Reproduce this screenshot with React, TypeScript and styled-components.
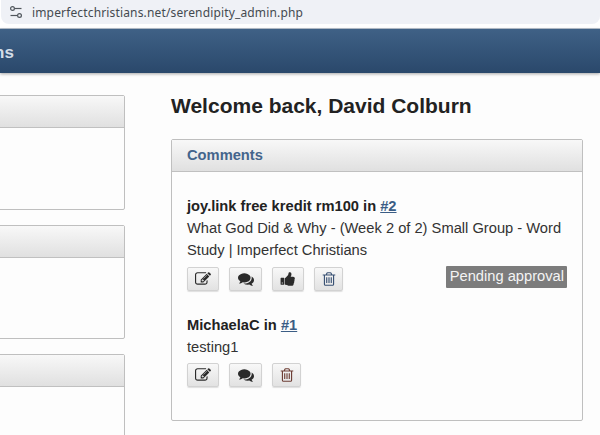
import React from 'react'
import styled, { createGlobalStyle } from 'styled-components'

const GlobalStyle = createGlobalStyle`
	html, body {
		margin: 0;
		padding: 0;
		background: #fdfdfd;
	}
	body {
		font-family: "Liberation Sans", Arial, sans-serif;
		color: #222;
	}
`

const Page = styled.div`
	width: 600px;
	height: 435px;
	overflow: hidden;
	background: #fdfdfd;
`

const BrowserBar = styled.div`
	height: 29px;
	box-sizing: border-box;
	background: #fff;
	padding: 0 0 4px 1px;
	border-bottom: 1px solid #b9c3cf;
`

const UrlPill = styled.div`
	height: 24px;
	display: flex;
	align-items: center;
	gap: 9px;
	padding-left: 8px;
	background: #eff1f6;
	border-radius: 0 0 8px 8px;
	font-family: "Noto Sans", "Open Sans", sans-serif;
	font-size: 12px;
	letter-spacing: 0.15px;
	color: #444a50;
`

const SiteHeader = styled.header`
	height: 44px;
	padding-top: 3px;
	box-sizing: border-box;
	display: flex;
	align-items: center;
	background: linear-gradient(#3f6186, #2a486b);
	box-shadow: 0 1px 3px rgba(0, 0, 0, 0.35);
	overflow: hidden;
`

const SiteTitle = styled.h1`
	margin: 0 0 0 -6px;
	font-size: 17px;
	font-weight: 700;
	color: #d3dde8;
`

const Columns = styled.div`
	display: flex;
	align-items: flex-start;
	gap: 46px;
	padding-top: 22px;
`

const Sidebar = styled.aside`
	width: 125px;
	flex: none;
	display: flex;
	flex-direction: column;
	gap: 15px;
`

const Main = styled.main`
	width: 412px;
	flex: none;
`

const Heading = styled.h2`
	margin: 0 0 23px;
	font-size: 21px;
	line-height: 21px;
	font-weight: 700;
	color: #222;
`

const Card = styled.section<{ $height: number }>`
	box-sizing: border-box;
	height: ${p => p.$height}px;
	background: #fdfdfd;
	border: 1px solid #bfbfbf;
	border-radius: 2px;
`

const SideCard = styled(Card)`
	margin-left: -10px;
	width: 135px;
`

const CardHeader = styled.div`
	height: 32px;
	box-sizing: border-box;
	display: flex;
	align-items: center;
	padding: 0 0 2px 15px;
	background: linear-gradient(#f8f8f8, #e0e0e0);
	border-bottom: 1px solid #c0c0c0;
	font-size: 14.7px;
	font-weight: 700;
	color: #44658c;
`

const CommentList = styled.div`
	display: flex;
	flex-direction: column;
	gap: 22px;
	padding: 23px 15px 0;
`

const Comment = styled.article``

const Author = styled.div`
	font-size: 14.7px;
	line-height: 22px;
	font-weight: 700;
	color: #222;
`

const EntryLink = styled.a`
	color: #3b5d85;
	text-decoration: underline;
`

const Excerpt = styled.div`
	font-size: 14.7px;
	line-height: 22px;
	color: #333;
`

const Actions = styled.div`
	display: flex;
	align-items: center;
	gap: 10px;
	margin-top: 5px;
`

const ActionButton = styled.button<{ $width: number }>`
	width: ${p => p.$width}px;
	height: 24px;
	padding: 0;
	display: flex;
	align-items: center;
	justify-content: center;
	background: linear-gradient(#f8f8f8, #e2e2e2);
	border: 1px solid #d2d2d2;
	border-radius: 2px;
	box-shadow: 0 1px 1px rgba(0, 0, 0, 0.12);
`

const Badge = styled.span`
	margin: 0 0 4px auto;
	padding: 0 3px 0 4px;
	height: 22px;
	line-height: 21px;
	background: #7c7c7c;
	border-radius: 1px;
	font-size: 14.7px;
	color: #f4f4f4;
`

const GlyphSvg = styled.svg`
	display: block;
	width: 16px;
	height: 16px;
`

type GlyphProps = { d: string; color?: string }

const Glyph = ({ d, color = '#2b2b2b' }: GlyphProps) => (
	<GlyphSvg viewBox="0 0 1792 1792" fill={color}>
		<path d={d} />
	</GlyphSvg>
)

const EDIT = 'M888 1184l116-116-152-152-116 116v56h96v96h56zm440-720q-16-16-33 1l-350 350q-17 17-1 33t33-1l350-350q17-17 1-33zm80 594v190q0 119-84.5 203.5t-203.5 84.5h-832q-119 0-203.5-84.5t-84.5-203.5v-832q0-119 84.5-203.5t203.5-84.5h832q63 0 117 25 15 7 18 23 3 17-9 29l-49 49q-14 14-32 8-23-6-45-6h-832q-66 0-113 47t-47 113v832q0 66 47 113t113 47h832q66 0 113-47t47-113v-126q0-13 9-22l64-64q15-15 35-7t20 29zm-96-738l288 288-672 672h-288v-288zm444 132l-92 92-288-288 92-92q28-28 68-28t68 28l152 152q28 28 28 68t-28 68z'
const COMMENTS = 'M1408 768q0 139-94 257t-256.5 186.5-353.5 68.5q-86 0-176-16-124 88-278 128-36 9-86 16h-3q-11 0-20.5-8t-11.5-21q-1-3-1-6.5t.5-6.5 2-6l2.5-5 3.5-5.5 4-5 4.5-5 4-4.5q5-6 23-25t26-29.5 22.5-29 25-38.5 20.5-44q-124-72-195-177t-71-224q0-139 94-257t256.5-186.5 353.5-68.5 353.5 68.5 256.5 186.5 94 257zm384 256q0 120-71 224.5t-195 176.5q10 24 20.5 44t25 38.5 22.5 29 26 29.5 23 25q1 1 4 4.5t4.5 5 4 5 3.5 5.5l2.5 5 2 6 .5 6.5-1 6.5q-3 14-13 22t-22 7q-50-7-86-16-154-40-278-128-90 16-176 16-271 0-472-132 58 4 88 4 161 0 309-45t264-129q125-92 192-212t67-254q0-77-23-152 129 71 204 178t75 230z'
const THUMB = 'M320 1344q0-26-19-45t-45-19q-27 0-45.5 19t-18.5 45q0 27 18.5 45.5t45.5 18.5q26 0 45-18.5t19-45.5zm160-512v640q0 26-19 45t-45 19h-288q-26 0-45-19t-19-45v-640q0-26 19-45t45-19h288q26 0 45 19t19 45zm1184 0q0 86-55 149 15 44 15 76 3 76-43 137 17 56 0 117-15 57-54 94 9 112-49 181-64 76-197 78h-129q-66 0-144-15.5t-121.5-29-120.5-39.5q-123-43-158-44-26-1-45-19.5t-19-44.5v-641q0-25 18-43.5t43-20.5q24-2 76-59t101-121q68-87 101-120 18-18 31-48t17.5-48.5 13.5-60.5q7-39 12.5-61t19.5-52 34-50q19-19 45-19 46 0 82.5 10.5t60 26 40 40.5 24 45 12 50 5 45 .5 39q0 38-9.5 76t-19 60-27.5 56q-3 6-10 18t-11 22-8 24h277q78 0 135 57t57 135z'
const TRASH = 'M704 736v576q0 14-9 23t-23 9h-64q-14 0-23-9t-9-23v-576q0-14 9-23t23-9h64q14 0 23 9t9 23zm256 0v576q0 14-9 23t-23 9h-64q-14 0-23-9t-9-23v-576q0-14 9-23t23-9h64q14 0 23 9t9 23zm256 0v576q0 14-9 23t-23 9h-64q-14 0-23-9t-9-23v-576q0-14 9-23t23-9h64q14 0 23 9t9 23zm128 724v-948h-896v948q0 22 7 40.5t14.5 27 10.5 8.5h832q3 0 10.5-8.5t14.5-27 7-40.5zm-672-1076h448l-48-117q-7-9-17-11h-317q-10 2-17 11zm928 32v64q0 14-9 23t-23 9h-96v948q0 83-47 143.5t-113 60.5h-832q-66 0-113-58.5t-47-141.5v-952h-96q-14 0-23-9t-9-23v-64q0-14 9-23t23-9h309l70-167q15-37 54-63t79-26h320q40 0 79 26t54 63l70 167h309q14 0 23 9t9 23z'

const SiteControlsIcon = () => (
	<svg width="14" height="14" viewBox="0 0 14 14" fill="none" stroke="#50565c" strokeWidth="1.2">
		<circle cx="3.5" cy="3.5" r="1.9" />
		<path d="M6 3.5h6.5" />
		<circle cx="10.5" cy="10.5" r="1.9" />
		<path d="M1.5 10.5H8" />
	</svg>
)

export default function App() {
	return (
		<Page>
			<GlobalStyle />
			<BrowserBar>
				<UrlPill>
					<SiteControlsIcon />
					imperfectchristians.net/serendipity_admin.php
				</UrlPill>
			</BrowserBar>
			<SiteHeader>
				<SiteTitle>ns</SiteTitle>
			</SiteHeader>
			<Columns>
				<Sidebar>
					<SideCard $height={115}>
						<CardHeader />
					</SideCard>
					<SideCard $height={114}>
						<CardHeader />
					</SideCard>
					<SideCard $height={115}>
						<CardHeader />
					</SideCard>
				</Sidebar>
				<Main>
					<Heading>Welcome back, David Colburn</Heading>
					<Card $height={282}>
						<CardHeader>Comments</CardHeader>
						<CommentList>
							<Comment>
								<Author>
									joy.link free kredit rm100 in <EntryLink href="#">#2</EntryLink>
								</Author>
								<Excerpt>What God Did &amp; Why - (Week 2 of 2) Small Group - Word Study | Imperfect Christians</Excerpt>
								<Actions>
									<ActionButton $width={32}><Glyph d={EDIT} /></ActionButton>
									<ActionButton $width={33}><Glyph d={COMMENTS} /></ActionButton>
									<ActionButton $width={32}><Glyph d={THUMB} /></ActionButton>
									<ActionButton $width={29}><Glyph d={TRASH} color="#3a5274" /></ActionButton>
									<Badge>Pending approval</Badge>
								</Actions>
							</Comment>
							<Comment>
								<Author>
									MichaelaC in <EntryLink href="#">#1</EntryLink>
								</Author>
								<Excerpt>testing1</Excerpt>
								<Actions>
									<ActionButton $width={32}><Glyph d={EDIT} /></ActionButton>
									<ActionButton $width={33}><Glyph d={COMMENTS} /></ActionButton>
									<ActionButton $width={29}><Glyph d={TRASH} color="#6e3f36" /></ActionButton>
								</Actions>
							</Comment>
						</CommentList>
					</Card>
				</Main>
			</Columns>
		</Page>
	)
}
